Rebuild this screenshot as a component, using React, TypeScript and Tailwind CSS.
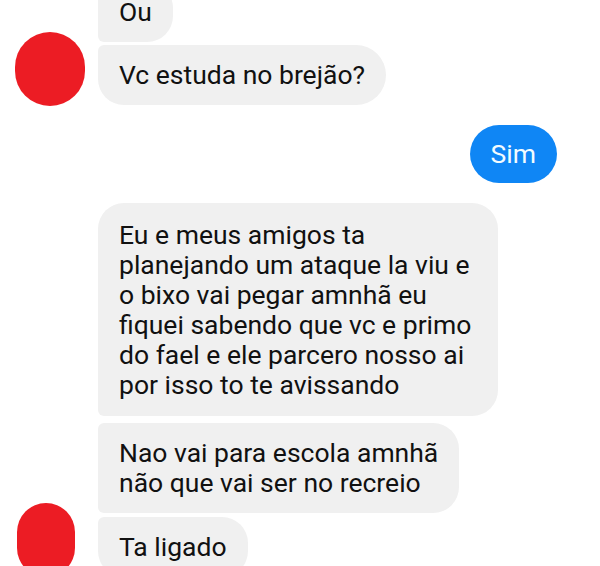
import React from "react";

type Msg = {
  lines: string[];
  corners: string;
  pad?: string;
  avatar?: "big" | "small";
};

const FONT = { fontFamily: "Roboto, 'Noto Sans', sans-serif" };

function Bubble({ lines, corners, pad }: { lines: string[]; corners: string; pad?: string }) {
  return (
    <div
      className={`w-fit bg-[#f0f0f0] text-[26.5px] leading-[30px] text-[#111] ${pad ?? "px-[21px] py-[15px]"} ${corners}`}
    >
      {lines.map((line, i) => (
        <div key={i} className="whitespace-nowrap">
          {line}
        </div>
      ))}
    </div>
  );
}

function Row({ msg }: { msg: Msg }) {
  return (
    <div className="flex items-end">
      {/* avatar slot has no height of its own, so the avatar hangs upward beside the bubble */}
      <div className="flex h-0 w-[98px] shrink-0 flex-col justify-end">
        {msg.avatar === "big" && (
          <div className="-mb-[1px] ml-[15px] h-[74px] w-[70px] shrink-0 rounded-full bg-[#ec1c24]" />
        )}
        {msg.avatar === "small" && (
          <div className="ml-[17px] h-[74px] w-[58px] shrink-0 rounded-full bg-[#ec1c24]" />
        )}
      </div>
      <Bubble lines={msg.lines} corners={msg.corners} pad={msg.pad} />
    </div>
  );
}

export default function App() {
  return (
    <div className="h-[566px] w-[600px] overflow-hidden bg-white antialiased" style={FONT}>
      <div className="-mt-[18px] flex flex-col">
        <Row msg={{ lines: ["Ou"], corners: "rounded-tl-[6px] rounded-bl-[6px] rounded-r-[26px]" }} />
        <div className="mt-[3px]">
          <Row
            msg={{
              lines: ["Vc estuda no brejão?"],
              corners: "rounded-tl-[6px] rounded-bl-[26px] rounded-r-[30px]",
              avatar: "big",
            }}
          />
        </div>

        <div className="mt-[20px] flex justify-end pr-[43px]">
          <div className="rounded-[30px] bg-[#0f86f5] px-[21px] py-[14px] text-[26.5px] leading-[30px] text-[#f2fbff]">
            Sim
          </div>
        </div>

        <div className="mt-[20px]">
          <Row
            msg={{
              lines: [
                "Eu e meus amigos ta",
                "planejando um ataque la viu e",
                "o bixo vai pegar amnhã eu",
                "fiquei sabendo que vc e primo",
                "do fael e ele parcero nosso ai",
                "por isso to te avissando",
              ],
              pad: "pl-[21px] pr-[27px] pt-[17px] pb-[16px]",
              corners: "rounded-tl-[26px] rounded-bl-[6px] rounded-r-[26px]",
            }}
          />
        </div>
        <div className="mt-[7px]">
          <Row
            msg={{
              lines: ["Nao vai para escola amnhã", "não que vai ser no recreio"],
              corners: "rounded-l-[6px] rounded-r-[26px]",
            }}
          />
        </div>
        <div className="mt-[4px]">
          <Row
            msg={{
              lines: ["Ta ligado"],
              corners: "rounded-tl-[6px] rounded-bl-[26px] rounded-r-[26px]",
              avatar: "small",
            }}
          />
        </div>
      </div>
    </div>
  );
}
